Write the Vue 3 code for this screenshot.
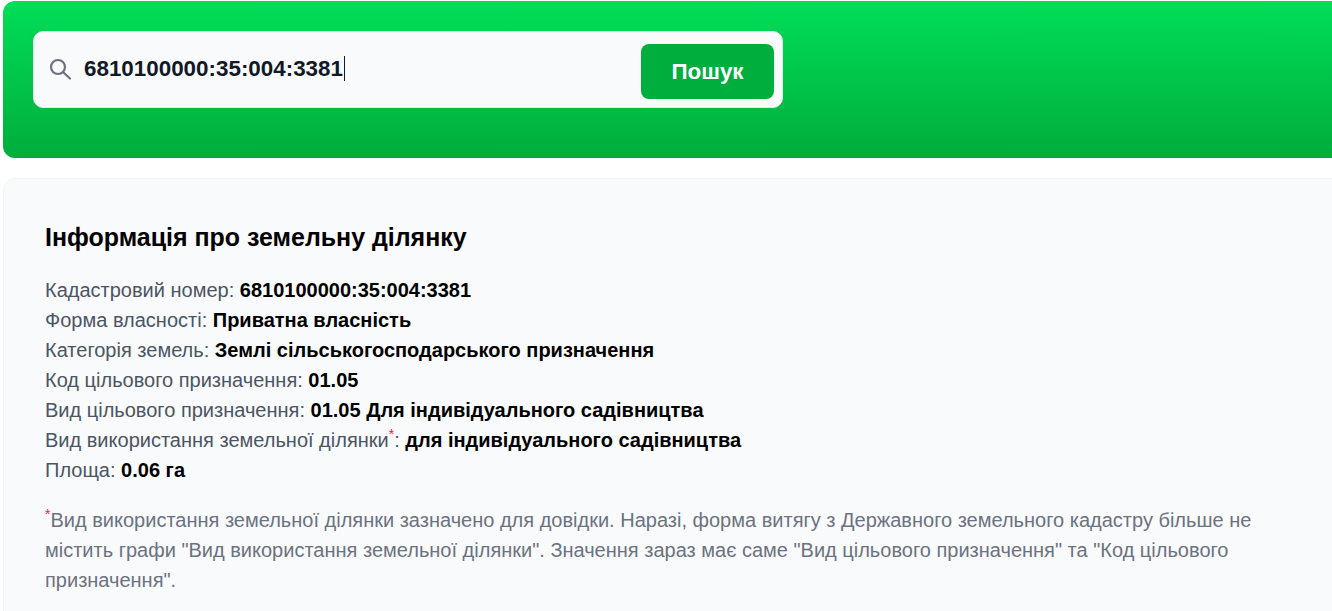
<script setup>
const query = '6810100000:35:004:3381'

const facts = [
  { label: 'Кадастровий номер', value: '6810100000:35:004:3381' },
  { label: 'Форма власності', value: 'Приватна власність' },
  { label: 'Категорія земель', value: 'Землі сільськогосподарського призначення' },
  { label: 'Код цільового призначення', value: '01.05' },
  { label: 'Вид цільового призначення', value: '01.05 Для індивідуального садівництва' },
  { label: 'Вид використання земельної ділянки', value: 'для індивідуального садівництва', starred: true },
  { label: 'Площа', value: '0.06 га' },
]
</script>

<template>
  <div class="page">
    <section class="hero">
      <form class="search" @submit.prevent>
        <svg class="search-icon" width="24" height="24" viewBox="0 0 24 24" fill="none" stroke="#6b7280" stroke-width="2.2" stroke-linecap="round">
          <circle cx="10" cy="10" r="7" />
          <path d="M15.5 15.5l6.5 6" />
        </svg>
        <div class="search-value">
          <span>{{ query }}</span><i class="caret"></i>
        </div>
        <button class="search-btn" type="submit">Пошук</button>
      </form>
    </section>

    <section class="panel">
      <h2 class="panel-title">Інформація про земельну ділянку</h2>
      <ul class="facts">
        <li v-for="fact in facts" :key="fact.label">
          {{ fact.label }}<sup v-if="fact.starred" class="star">*</sup>: <b>{{ fact.value }}</b>
        </li>
      </ul>
      <p class="note">
        <sup class="star">*</sup>Вид використання земельної ділянки зазначено для довідки. Наразі, форма витягу з Державного земельного кадастру більше не містить графи "Вид використання земельної ділянки". Значення зараз має саме "Вид цільового призначення" та "Код цільового призначення".
      </p>
    </section>
  </div>
</template>

<style>
html,
body {
  margin: 0;
  background: #fff;
  overflow: hidden;
}
</style>

<style scoped>
.page {
  height: 611px;
  overflow: hidden;
  box-sizing: border-box;
  padding: 1px 0 0 3px;
  font-family: "Liberation Sans", Arial, sans-serif;
}

.hero {
  width: 1360px;
  height: 157px;
  box-sizing: border-box;
  padding: 30px;
  border-radius: 12px;
  background: linear-gradient(180deg, #00de57 0%, #00ad3c 100%);
}

.search {
  width: 750px;
  height: 77px;
  box-sizing: border-box;
  display: flex;
  align-items: center;
  padding: 0 8px 0 14px;
  border: 1px solid #e5e7eb;
  border-radius: 10px;
  background: #f9fafb;
}

.search-icon {
  flex: none;
  margin: -1px 12px 0 0;
}

.search-value {
  flex: 1;
  display: flex;
  align-items: center;
  margin-top: -2px;
  font-size: 22.4px;
  font-weight: 700;
  color: #111827;
}

.caret {
  width: 1px;
  height: 25px;
  margin-left: 1px;
  background: #111827;
}

.search-btn {
  width: 133px;
  height: 55px;
  margin-top: 4px;
  border: 0;
  border-radius: 8px;
  background: #00ae3d;
  color: #fff;
  font: 700 22.4px "Liberation Sans", Arial, sans-serif;
}

.panel {
  width: 1360px;
  height: 460px;
  box-sizing: border-box;
  margin-top: 20px;
  padding: 42px 41px;
  border: 1px solid #f3f4f6;
  border-radius: 12px;
  background: #f9fafb;
}

.panel-title {
  margin: 0 0 22px;
  font-size: 24.96px;
  line-height: 32px;
  font-weight: 700;
  color: #000;
}

.facts {
  margin: 0;
  padding: 0;
  list-style: none;
  font-size: 20px;
  line-height: 30px;
  color: #4b5563;
}

.facts b {
  color: #000;
}

.star {
  color: #ee1c3a;
  font-size: 14px;
  line-height: 0;
}

.note {
  width: 1240px;
  margin: 20px 0 0;
  font-size: 20px;
  line-height: 30px;
  color: #6b7280;
}
</style>
